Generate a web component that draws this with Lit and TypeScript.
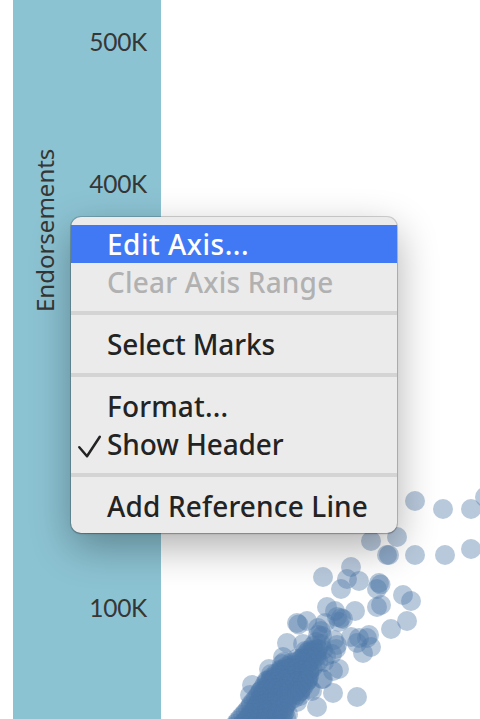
import { LitElement, html, svg, css, nothing } from "lit";
import { customElement } from "lit/decorators.js";
import { classMap } from "lit/directives/class-map.js";
import { styleMap } from "lit/directives/style-map.js";

type Point = [number, number];

// Individually visible marks, in page coordinates.
const MARKS: Point[] = [
  [415, 501], [443, 509], [471, 509], [485, 497], [397, 537], [371, 541],
  [387, 555], [389, 555], [415, 555], [445, 555], [471, 549],
  [323, 577], [351, 567], [347, 579], [359, 581], [341, 589],
  [379, 583], [380.5, 584.5], [377, 589], [403, 595], [411, 601],
  [377, 607], [381, 605], [407, 621], [391, 629], [327, 607], [355, 611],
  [335, 611], [337, 617], [341, 618], [343, 619], [339, 622],
  [307, 621], [297, 623], [298.5, 624.5], [287, 643], [325, 623],
  [321, 631], [318, 628], [318, 635], [322, 636], [303, 644], [305, 651],
  [369, 635], [367, 638], [357, 643], [359, 638], [351, 637], [371, 647],
  [363, 653], [337, 645], [336, 649], [334, 640], [332, 654],
  [339, 669], [333, 671], [323, 679], [322, 679], [333, 693], [357, 697],
  [317, 707], [283, 657], [282, 664], [284, 662], [269, 669], [252, 685],
  [297, 702], [310, 689], [312, 691], [288, 714], [286, 717], [324, 662],
  [326, 656], [271, 674], [250, 695], [300, 696], [316, 642], [321, 644],
  [313, 646], [318, 649], [323, 650], [309, 650],
];

// Horizontal extent of the dense cluster at successive heights: y, from, to.
const BANDS: [number, number, number][] = [
  [651, 306, 319], [660, 298, 317],
  [670, 281, 308], [680, 266, 307], [690, 259, 299], [705, 249, 285],
  [731, 234, 280],
];

function cluster(): Point[] {
  const out: Point[] = [];
  for (let i = 0; i < BANDS.length - 1; i++) {
    const [y0, a0, b0] = BANDS[i];
    const [y1, a1, b1] = BANDS[i + 1];
    for (let y = y0; y < y1; y += 3.3) {
      const t = (y - y0) / (y1 - y0);
      const a = a0 + (a1 - a0) * t;
      const b = b0 + (b1 - b0) * t;
      const n = Math.max(2, Math.round((b - a) / 5));
      for (let k = 0; k <= n; k++) {
        const wobble = Math.sin(k * 7.1 + y * 3.7) * 1.5;
        out.push([a + ((b - a) * k) / n + wobble, y + wobble]);
      }
    }
  }
  return out;
}

interface Item {
  label: string;
  spacing: number;
  state?: "active" | "disabled";
  checked?: boolean;
}

const GROUPS: Item[][] = [
  [
    { label: "Edit Axis...", spacing: 0.5, state: "active" },
    { label: "Clear Axis Range", spacing: 0.2, state: "disabled" },
  ],
  [{ label: "Select Marks", spacing: -0.15 }],
  [
    { label: "Format...", spacing: 0.15 },
    { label: "Show Header", spacing: -0.1, checked: true },
  ],
  [{ label: "Add Reference Line", spacing: 0.15 }],
];

@customElement("context-menu")
export class ContextMenu extends LitElement {
  static styles = css`
    :host {
      display: block;
      box-sizing: border-box;
      width: 326px;
      padding: 8px 0;
      border-radius: 10px;
      background: #ebebeb;
      box-shadow: 0 0 0 1px rgba(0, 0, 0, 0.16), 0 1px 2px rgba(0, 0, 0, 0.2),
        0 14px 40px rgba(0, 0, 0, 0.32);
      font: 500 28px/38px "Noto Sans", sans-serif;
      color: #232323;
    }
    .item {
      display: grid;
      grid-template-columns: 36px 1fr;
      height: 38px;
      white-space: nowrap;
    }
    .active { background: #4178f4; color: #fff; }
    .disabled { color: #b1b1b1; }
    .rule { height: 4px; margin: 10px 0; background: #d4d4d4; }
    .check { display: block; width: 36px; height: 38px; }
  `;

  render() {
    return GROUPS.map(
      (group, i) => html`
        ${i ? html`<div class="rule"></div>` : nothing}
        ${group.map(
          (item) => html`<div
            class=${classMap({
              item: true,
              active: item.state === "active",
              disabled: item.state === "disabled",
            })}
          >
            <span>${item.checked
              ? html`<svg class="check" viewBox="0 0 36 38">
                  <path d="M8.3 22.2 L16 31.2 L28.8 11.7" fill="none" stroke="#232323"
                    stroke-width="2.5" stroke-linecap="round" stroke-linejoin="round" />
                </svg>`
              : nothing}</span>
            <span style=${styleMap({ letterSpacing: `${item.spacing}px` })}
              >${item.label}</span>
          </div>`
        )}
      `
    );
  }
}

@customElement("app-root")
export class AppRoot extends LitElement {
  static styles = css`
    :host {
      display: flex;
      position: relative;
      box-sizing: border-box;
      width: 480px;
      height: 719px;
      padding-left: 13px;
      overflow: hidden;
      background: #fff;
    }
    .axis {
      display: flex;
      width: 148px;
      height: 719px;
      background: #8cc3d3;
      color: #363636;
    }
    .title {
      width: 64px;
      height: 460px;
      line-height: 64px;
      writing-mode: vertical-rl;
      transform: rotate(180deg);
      text-align: center;
      font-family: "Noto Sans", sans-serif;
      font-size: 24px;
    }
    .ticks {
      flex: 1;
      display: grid;
      grid-template-rows: 84px 200px 1fr 222px;
      align-items: center;
      padding-right: 14px;
      text-align: right;
      font: 24.5px/30px Lato, sans-serif;
      letter-spacing: -0.3px;
    }
    .plot { position: absolute; left: 0; top: 0; }
    .menu { position: absolute; left: 71px; top: 217px; }
  `;

  render() {
    return html`
      <div class="axis">
        <div class="title">Endorsements</div>
        <div class="ticks">
          <span>500K</span>
          <span>400K</span>
          <span></span>
          <span>100K</span>
        </div>
      </div>
      <svg class="plot" width="480" height="719" fill="#4e79a7" fill-opacity="0.4">
        ${[...MARKS, ...cluster()].map(([x, y]) => svg`<circle cx=${x} cy=${y} r="10" />`)}
      </svg>
      <context-menu class="menu"></context-menu>
    `;
  }
}
